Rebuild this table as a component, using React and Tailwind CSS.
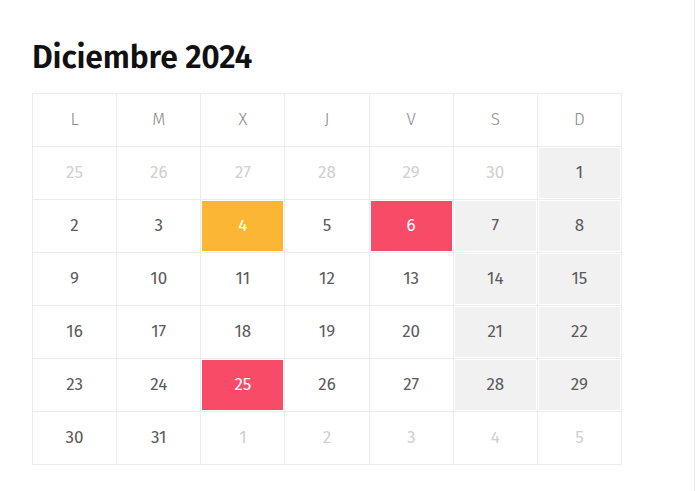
import React from "react";

const weeks = [
  [[25, "out"], [26, "out"], [27, "out"], [28, "out"], [29, "out"], [30, "out"], [1, "we"]],
  [[2], [3], [4, "yellow"], [5], [6, "red"], [7, "we"], [8, "we"]],
  [[9], [10], [11], [12], [13], [14, "we"], [15, "we"]],
  [[16], [17], [18], [19], [20], [21, "we"], [22, "we"]],
  [[23], [24], [25, "red"], [26], [27], [28, "we"], [29, "we"]],
  [[30], [31], [1, "out"], [2, "out"], [3, "out"], [4, "out"], [5, "out"]],
];

const days = ["L", "M", "X", "J", "V", "S", "D"];

function Cell({ n, kind }) {
  let inner = "text-[#5a5a5a]";
  if (kind === "out") inner = "text-[#d0d0d0]";
  if (kind === "we") inner = "bg-[#f1f1f1] text-[#5a5a5a]";
  if (kind === "yellow") inner = "bg-[#fbb734] text-white";
  if (kind === "red") inner = "bg-[#f84b68] text-white";
  return (
    <div className="border-r border-b border-[#ececec] p-[1px] h-[53px]">
      <div className={`h-full flex items-center justify-center text-[17px] ${inner}`}>{n}</div>
    </div>
  );
}

export default function App() {
  return (
    <div
      className="w-[695px] h-[491px] bg-white border-r border-[#ededed] pl-[32px] pt-[38px]"
      style={{ fontFamily: "'Fira Sans', 'Open Sans', 'Noto Sans', sans-serif" }}
    >
      <h1 className="text-[32px] font-semibold text-[#111] leading-[38px] tracking-[-0.2px]">
        Diciembre 2024
      </h1>
      {/* ===== CALENDARIO ===== */}
      <div className="mt-[17px] w-[590px] grid grid-cols-7 border-l border-t border-[#ececec]">
        {days.map((d) => (
          <div
            key={d}
            className="border-r border-b border-[#ececec] h-[53px] flex items-center justify-center text-[17px] text-[#888] font-light"
          >
            {d}
          </div>
        ))}
        {weeks.map((w, i) =>
          w.map(([n, kind], j) => <Cell key={`${i}-${j}`} n={n} kind={kind} />)
        )}
      </div>
    </div>
  );
}
